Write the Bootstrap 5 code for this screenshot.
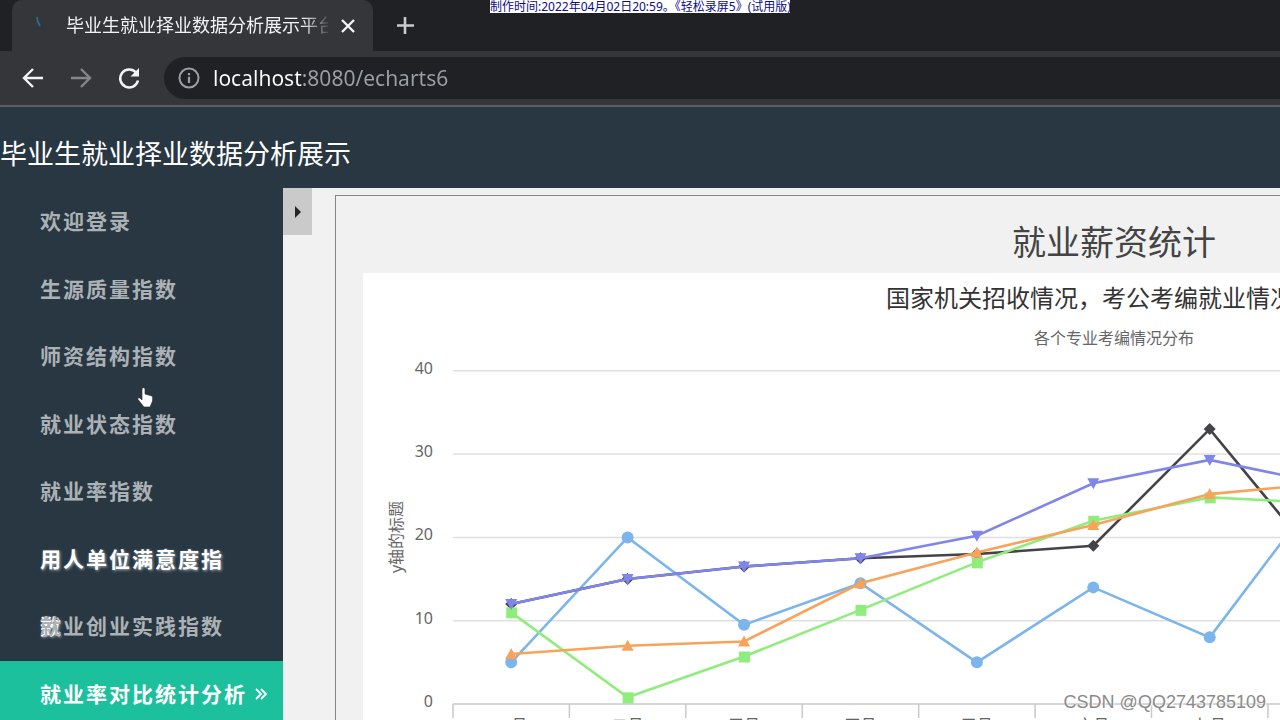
<!DOCTYPE html>
<html lang="zh-CN">
<head>
<meta charset="utf-8">
<meta name="viewport" content="width=device-width, initial-scale=1">
<title>毕业生就业择业数据分析展示平台</title>
<link rel="stylesheet" href="https://cdn.jsdelivr.net/npm/bootstrap@5.3.0/dist/css/bootstrap.min.css">
<style>
  body { font-family: "Noto Sans", "Noto Sans CJK SC", sans-serif; background: #f1f1f1; }
  svg { display: block; }
  .bare { background: none; border: 0; padding: 0; }
  /* browser chrome */
  .tab-strip { background: #202124; height: 51px; padding-left: 12px; }
  .browser-tab { background: #35363a; width: 361px; border-radius: 10px 10px 0 0; padding: 0 17px 0 22px; }
  .tab-title { font-size: 18px; color: #f1f3f4; width: 262px; -webkit-mask-image: linear-gradient(90deg, #000 236px, transparent 266px); mask-image: linear-gradient(90deg, #000 236px, transparent 266px); }
  .toolbar { background: #35363a; height: 56px; padding-left: 20px; border-bottom: 2px solid #5c5d60; }
  .address { background: #202124; border-radius: 21px 0 0 21px; height: 42px; padding-left: 13px; }
  .address input { font-size: 21px; line-height: 28px; margin-left: 12px; outline: 0; color: transparent; background: linear-gradient(90deg, #fff 89px, #9aa0a6 89px); -webkit-background-clip: text; background-clip: text; }
  .stamp { background: #fff; color: #0a0a8c; font-size: 12px; line-height: 13px; width: 300px; }
  /* application */
  .app-header { background: #283742; height: 81px; color: #fff; }
  .app-header h1 { font-size: 27px; line-height: 40px; padding-top: 27px; }
  .side-menu { background: #283742; width: 283px; }
  .menu-list { display: grid; grid-template-rows: repeat(8, minmax(0, 1fr)); height: 75vh; }
  .menu-list a { display: block; height: 100%; padding-left: 40px; padding-right: 48px; font-size: 21px; font-weight: 700; letter-spacing: 2px; line-height: 67px; color: #abb1b5; text-decoration: none; }
  .menu-list .lit { color: #fff; text-shadow: 1px 1px 3px #ffffff99; }
  .menu-list .chosen { background: #1dc09c; color: #fff; padding-right: 15px; }
  .fold { background: #cbcaca; width: 29px; height: 47px; }
  .panel { border: 1px solid #858585; min-width: 1558px; margin: 7px 0 0 23px; padding: 0 27px; }
  .panel h2 { font-size: 34px; line-height: 61px; color: #444; }
  .chart-box { background: #fff; padding-top: 5px; }
  .chart-box h3 { font-size: 24px; line-height: 40px; color: #333; }
  .chart-box p { font-size: 16px; line-height: 40px; color: #666; }
  .chart-box text { font-size: 16px; fill: #666; }
  .watermark { right: 14px; bottom: 6px; font: 18px/24px "Liberation Sans", sans-serif; color: #8a8a8a; text-shadow: 1px 1px 0 #fff; }
</style>
</head>
<body class="vh-100 overflow-hidden d-flex flex-column">
<div class="stamp position-absolute top-0 start-50 translate-middle-x text-nowrap text-center">制作时间:2022年04月02日20:59。《轻松录屏5》(试用版)</div>

<div class="tab-strip d-flex flex-shrink-0">
  <div class="browser-tab d-flex align-items-center">
    <svg class="flex-shrink-0" width="32" height="24" fill="none"><path d="M3 3Q3 8 6 12" stroke="#2b6d94" stroke-width="1.800"/><path d="M7 16h5" stroke="#2c3744" stroke-width="2"/></svg>
    <span class="tab-title text-nowrap overflow-hidden">毕业生就业择业数据分析展示平台</span>
    <button class="bare ms-auto" aria-label="关闭标签页"><svg width="16" height="16"><path d="M2 2L14 14M14 2L2 14" stroke="#f1f3f4" stroke-width="2.4"/></svg></button>
  </div>
  <button class="bare ms-4" aria-label="新标签页"><svg width="18" height="18"><path d="M8 0V17M0 8.500H17" stroke="#c8cacc" stroke-width="2.6"/></svg></button>
</div>
<div class="toolbar d-flex align-items-center flex-shrink-0">
  <button class="bare me-4" aria-label="后退"><svg width="24" height="24" fill="none" stroke="#f1f3f4" stroke-width="2.4"><path d="M23 12H4M13 3L4 12L13 21"/></svg></button>
  <button class="bare me-4" aria-label="前进"><svg width="24" height="24" fill="none" stroke="#85878a" stroke-width="2.4"><path d="M3 12H22M13 3L22 12L13 21"/></svg></button>
  <button class="bare me-4" aria-label="刷新"><svg width="24" height="24" fill="none"><path d="M20 6.500A9 9 0 1 0 22 14.500" stroke="#f1f3f4" stroke-width="2.500"/><path d="M23 2V10.500H14.500Z" fill="#f1f3f4"/></svg></button>
  <div class="address d-flex align-items-center flex-fill">
    <svg class="flex-shrink-0" width="24" height="24"><circle cx="12" cy="12" r="9.500" fill="none" stroke="#9aa0a6" stroke-width="2"/><path d="M12 7V9.300M12 10.800V17" stroke="#9aa0a6" stroke-width="2.200"/></svg>
    <input class="border-0 p-0 flex-fill" type="text" aria-label="地址" value="localhost:8080/echarts6">
  </div>
</div>

<header class="app-header flex-shrink-0"><h1 class="m-0 fw-normal">毕业生就业择业数据分析展示</h1></header>
<div class="d-flex flex-fill overflow-hidden">
  <nav class="side-menu flex-shrink-0">
    <ul class="menu-list list-unstyled m-0">
      <li><a href="#">欢迎登录</a></li>
      <li><a href="#">生源质量指数</a></li>
      <li><a href="#">师资结构指数</a></li>
      <li><a href="#">就业状态指数</a></li>
      <li><a href="#">就业率指数</a></li>
      <li><a href="#" class="lit">用人单位满意度指数</a></li>
      <li><a href="#">就业创业实践指数</a></li>
      <li><a href="#" class="chosen d-flex align-items-center justify-content-between">就业率对比统计分析<svg width="13" height="14" fill="none" stroke="#fff" stroke-width="1.800"><path d="M1 2L6 7L1 12M6 2L11 7L6 12"/></svg></a></li>
    </ul>
  </nav>
  <button class="fold border-0 p-0 flex-shrink-0 d-flex align-items-center justify-content-center" aria-label="收起菜单"><svg width="8" height="12"><path d="M1 0L7 6L1 12Z" fill="#262626"/></svg></button>
  <main class="flex-fill overflow-hidden">
    <section class="panel">
      <h2 class="m-0 pt-3 text-center fw-normal">就业薪资统计</h2>
      <div class="chart-box text-center">
        <h3 class="m-0 fw-normal">国家机关招收情况，考公考编就业情况统计</h3>
        <p class="m-0">各个专业考编情况分布</p>
        <svg id="chart" width="100%" height="460" fill="none"></svg>
      </div>
    </section>
  </main>
</div>

<svg class="position-absolute" style="left:137px;top:387px" width="18" height="22" viewBox="0 0 18 22"><path d="M5 1.500Q6.500 0 8 1.500V7L15 9Q16 10 15.500 14L13 20H7L1 12.500Q0 10 3 11L5 13Z" fill="#fff" stroke="#222c35" stroke-width=".6"/></svg>
<div class="watermark position-absolute">CSDN @QQ2743785109</div>

<script src="https://cdn.jsdelivr.net/npm/bootstrap@5.3.0/dist/js/bootstrap.bundle.min.js"></script>
<script>
const months = ['一月','二月','三月','四月','五月','六月','七月','八月','九月','十月','十一月','十二月'];
const series = [
  { color: '#7cb5ec', data: [5,20,9.5,14.5,5,14,8,26.5,23.3,18.3,13.9,9.6], mark: 'M-6 0a6 6 0 1 0 12 0a6 6 0 1 0 -12 0Z' },
  { color: '#434348', data: [12,15,16.5,17.5,18,19,33,16,20.1,14.1,8.6,2.5], mark: 'M0 -6L6 0L0 6L-6 0Z' },
  { color: '#90ed7d', data: [11,0.8,5.7,11.3,17,22,24.8,24.1,20.1,14.1,8.6,2.5], mark: 'M-5 -5H6V6H-5Z' },
  { color: '#f7a35c', data: [6,7,7.5,14.5,18.2,21.5,25.2,26.5,23.3,18.3,13.9,9.6], mark: 'M0 -6L6 5H-6Z' },
  { color: '#8085e9', data: [12,15,16.5,17.5,20.2,26.5,29.3,26.4,23.3,18.3,13.9,9.6], mark: 'M-6 -5H6L0 6Z' }
];
const chart = document.getElementById('chart');
function draw() {
  const left = 90, base = 346, unit = 8.33;
  const step = (chart.clientWidth - left - 15) / months.length;
  const right = left + step * months.length;
  const x = i => left + step * (i + .5), y = v => base - v * unit;
  let out = '';
  for (let v = 0; v <= 40; v += 10) {
    out += `<path d="M${left} ${y(v)}H${right}" stroke="${v ? '#dfdfdf' : '#c8c8c8'}" stroke-width="1.5"/>`;
    out += `<text x="70" y="${y(v) + 3}" text-anchor="end">${v}</text>`;
  }
  for (let i = 0; i <= months.length; i++) out += `<path d="M${left + step * i} ${base}v14" stroke="#c8c8c8" stroke-width="1.5"/>`;
  months.forEach((m, i) => out += `<text x="${x(i)}" y="373" text-anchor="middle">${m}</text>`);
  out += '<text transform="translate(39 179) rotate(-90)" text-anchor="middle">y轴的标题</text>';
  for (const s of series) {
    out += `<polyline points="${s.data.map((v, i) => x(i) + ',' + y(v)).join(' ')}" stroke="${s.color}" stroke-width="2.6"/>`;
    s.data.forEach((v, i) => out += `<path transform="translate(${x(i)} ${y(v)})" d="${s.mark}" fill="${s.color}"/>`);
  }
  chart.innerHTML = out;
}
draw();
addEventListener('resize', draw);
</script>
</body>
</html>
